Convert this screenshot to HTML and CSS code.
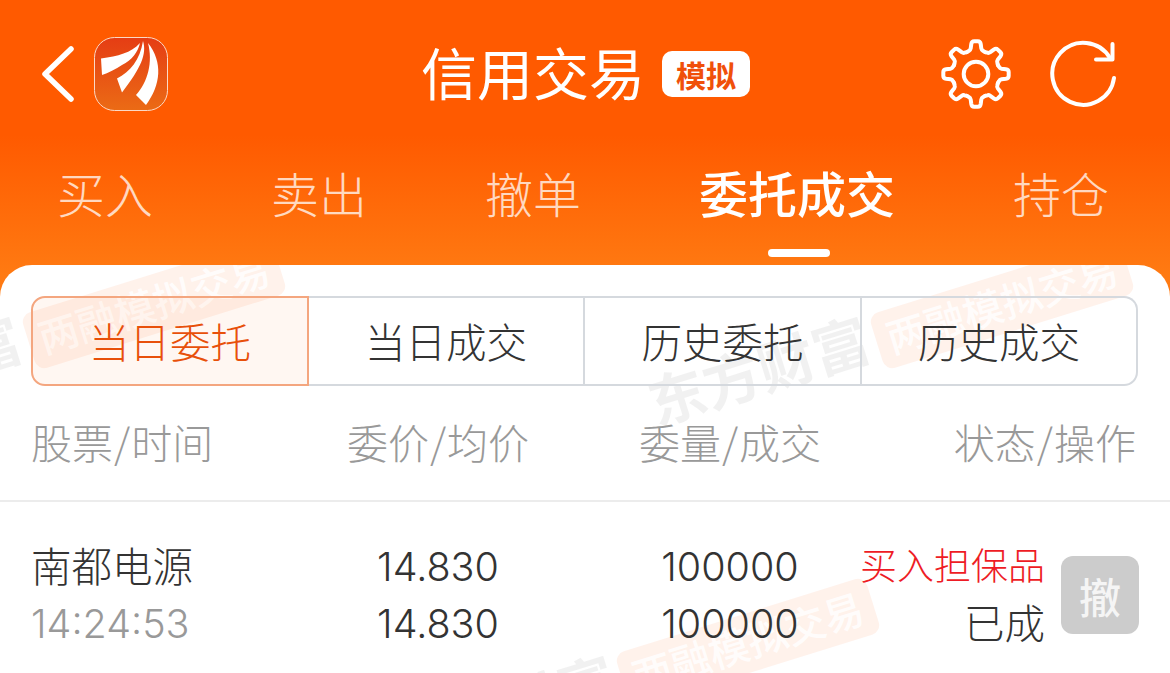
FILE: index.html
```html
<!DOCTYPE html>
<html lang="zh-CN">
<head>
<meta charset="utf-8">
<title>信用交易</title>
<link rel="stylesheet" href="styles.css">
</head>
<body>
<div class="page">
  <header class="head">
    <div class="topbar">
      <div class="top-left">
        <svg class="back" viewBox="0 0 40 60"><path d="M31 5 L5 30 L31 55"/></svg>
        <svg class="logo" viewBox="94 37 74 74">
          <defs><linearGradient id="lg" x1="0" y1="0" x2="0" y2="1"><stop offset="0" stop-color="#e53d14"/><stop offset="1" stop-color="#eb6b15"/></linearGradient></defs>
          <rect x="94.5" y="37.5" width="73" height="73" rx="20" fill="url(#lg)" stroke="#fbd9c6"/>
          <path fill="#fff" d="M101 58.5 C118 56 131 53 140 43 C138 52 132 60 122 65 C116 69 108 73 102 75 Z"/>
          <path fill="#fff" d="M143 41 C147 54 141 68 122 92.5 L117 78.5 C130 72 140 60 143 41Z"/>
          <path fill="#fff" d="M148 43 C163 62 161 85 146 105 L136 95 C148 82 153 62 148 43Z"/>
        </svg>
      </div>
      <div class="title-group">
        <span class="title">信用交易</span>
        <span class="sim">模拟</span>
      </div>
      <div class="top-right">
        <svg class="gear" viewBox="-38 -38 76 76">
          <defs><path id="tooth" d="M-9.6 -23.1 L-7.4 -24.4 Q-6 -25 -5.6 -27 L-5 -31.5 Q-4.5 -34.5 -2 -34.5 L2 -34.5 Q4.5 -34.5 5 -31.5 L5.6 -27 Q6 -25 7.4 -24.4 L9.6 -23.1"/></defs>
          <use href="#tooth"/>
          <use href="#tooth" transform="rotate(45)"/>
          <use href="#tooth" transform="rotate(90)"/>
          <use href="#tooth" transform="rotate(135)"/>
          <use href="#tooth" transform="rotate(180)"/>
          <use href="#tooth" transform="rotate(225)"/>
          <use href="#tooth" transform="rotate(270)"/>
          <use href="#tooth" transform="rotate(315)"/>
          <circle r="13"/>
        </svg>
        <svg class="refresh" viewBox="1047 38 70 72">
          <path d="M1113 78 A31 31 0 1 1 1109 58"/>
          <path d="M1111.5 44 V59.5 H1095"/>
        </svg>
      </div>
    </div>
    <nav class="tabs">
      <span class="tab">买入</span>
      <span class="tab">卖出</span>
      <span class="tab">撤单</span>
      <span class="tab tab-on">委托成交</span>
      <span class="tab">持仓</span>
    </nav>
  </header>
  <main class="card">
    <div class="wm-badge wm-b1">两融模拟交易</div>
    <div class="wm-badge wm-b2">两融模拟交易</div>
    <div class="wm-badge wm-b3">两融模拟交易</div>
    <div class="wm-text wm-t1">东方财富</div>
    <div class="wm-text wm-t2">东方财富</div>
    <div class="wm-text wm-t3">东方财富</div>
    <div class="content">
      <div class="segs">
        <div class="seg seg-on">当日委托</div>
        <div class="seg">当日成交</div>
        <div class="seg">历史委托</div>
        <div class="seg seg-last">历史成交</div>
      </div>
      <div class="grid thead">
        <div class="c1">股票<span class="slash">/</span>时间</div>
        <div class="c2">委价<span class="slash">/</span>均价</div>
        <div class="c3">委量<span class="slash">/</span>成交</div>
        <div class="c4 c4-head">状态<span class="slash">/</span>操作</div>
      </div>
      <div class="grid row">
        <div class="c1">
          <div class="cell cjk">南都电源</div>
          <div class="cell time">14:24:53</div>
        </div>
        <div class="c2">
          <div class="cell num">14.830</div>
          <div class="cell num">14.830</div>
        </div>
        <div class="c3">
          <div class="cell num">100000</div>
          <div class="cell num">100000</div>
        </div>
        <div class="c4 status">
          <div class="status-text">
            <div class="cell cjk buy">买入担保品</div>
            <div class="cell cjk">已成</div>
          </div>
          <div class="cancel">撤</div>
        </div>
      </div>
    </div>
  </main>
</div>
</body>
</html>
```
FILE: styles.css
```css
* { box-sizing: border-box; }
html, body { margin: 0; padding: 0; }
body {
  font-family: "Noto Sans CJK SC", "Noto Sans", sans-serif;
  font-weight: 300;
  color: #333;
  background: #fff;
}
.page { width: 1170px; height: 673px; overflow: hidden; position: relative; background: linear-gradient(#ff5a00 0, #ff5a00 135px, #ff7a12 275px, #ff7a12 100%); }
.head { height: 265px; display: flex; flex-direction: column; }
.topbar {
  height: 148px;
  display: grid;
  grid-template-columns: 1fr auto 1fr;
  align-items: center;
}
.top-left { display: flex; align-items: center; padding-left: 40px; gap: 14px; }
.back { width: 40px; height: 60px; }
.back path { fill: none; stroke: #fff; stroke-width: 5.5; stroke-linecap: round; stroke-linejoin: round; }
.logo { width: 74px; height: 74px; }
.title-group { display: flex; align-items: center; gap: 17px; margin-left: 1px; }
.title { color: #fff; font-size: 56px; line-height: 70px; font-weight: 400; padding-bottom: 6px; height: 76px; }
.sim {
  width: 88px; height: 46px;
  background: #fff; border-radius: 10px;
  color: #f0500a; font-size: 30px; font-weight: 700;
  display: flex; align-items: center; justify-content: center;
}
.top-right { display: flex; justify-content: flex-end; align-items: center; padding-right: 52px; gap: 36px; }
.gear { width: 72px; height: 72px; }
.gear path, .gear circle, .gear use { fill: none; stroke: #fff; stroke-width: 4.2; stroke-linecap: round; }
.refresh { width: 70px; height: 72px; }
.refresh path { fill: none; stroke: #fff; stroke-width: 4; stroke-linecap: round; stroke-linejoin: round; }
.tabs { display: flex; gap: 118px; padding-left: 57px; height: 120px; margin-top: -3px; }
.tab {
  position: relative;
  color: rgba(255,255,255,.75);
  font-size: 48px; line-height: 94px; white-space: nowrap; height: 94px; font-weight: 300;
}
.tab-on { color: #fff; font-size: 49px; font-weight: 500; }
.tab-on::after {
  content: ""; position: absolute; left: 69px; top: 104px;
  width: 62px; height: 8px; border-radius: 4px; background: #fff;
}
.card {
  position: relative; height: 408px; overflow: hidden;
  background: #fff; border-radius: 32px 32px 0 0;
}
.content { position: relative; }
.wm-badge, .wm-text { position: absolute; white-space: nowrap; transform: translate(-50%, -50%) rotate(-17.3deg); }
.wm-badge {
  width: 262px; height: 58px; border-radius: 10px;
  background: rgba(255, 90, 0, .08);
  color: rgba(255,255,255,.85);
  font-size: 40px; line-height: 54px; font-weight: 500; text-align: center;
}
.wm-text { color: rgba(0,0,0,.055); font-size: 57px; line-height: 60px; font-weight: 700; }
.wm-b1 { left: 154px; top: 39px; }
.wm-b2 { left: 1002px; top: 39px; }
.wm-b3 { left: 748px; top: 378px; }
.wm-t1 { left: -90px; top: 103px; }
.wm-t2 { left: 758px; top: 103px; }
.wm-t3 { left: 504px; top: 442px; }
.segs {
  margin: 31px 32px 0 31px;
  height: 90px;
  display: grid;
  grid-template-columns: 278px 276px 277px 1fr;
}
.seg {
  border: 2px solid #d5d9de; border-left: 0; border-right: 2px solid #d5d9de;
  display: flex; align-items: center; justify-content: center;
  font-size: 40.5px; color: #333; padding-bottom: 2px;
}
.seg-on {
  border: 2px solid #f4a67f; background: rgba(255, 90, 0, .05);
  color: #e8500a; border-radius: 14px 0 0 14px;
}
.seg-last { border-radius: 0 14px 14px 0; }
.grid {
  display: grid;
  grid-template-columns: 260px 292px 292px 1fr;
  padding: 0 32px;
}
.thead {
  height: 116px; align-items: center; padding-bottom: 4px;
  border-bottom: 2px solid #ececec;
  color: #999; font-size: 41px; white-space: nowrap;
}
.slash { margin: 0 1px; }
.c1 { margin-left: -1px; }
.c2, .c3 { text-align: center; }
.c4 { text-align: right; min-width: 0; }
.c4-head { padding-right: 2px; }
.row { padding-top: 37px; }
.cell { font-size: 40.5px; line-height: 57px; white-space: nowrap; }
.cjk { position: relative; top: -3px; }
.num { font-family: "Inter", sans-serif; font-size: 39.5px; font-weight: 300; }
.time { font-family: "Inter", sans-serif; font-size: 39.5px; color: #999; }
.status { display: flex; justify-content: flex-end; gap: 16px; margin-right: -1px; }
.status-text { text-align: right; flex-shrink: 0; }
.buy { color: #ee1c25; font-size: 37px; }
.cancel {
  width: 78px; height: 78px; margin-top: 17px; flex-shrink: 0;
  background: #ccc; border-radius: 12px;
  color: #f5f5f5; font-size: 42px; font-weight: 500;
  display: flex; align-items: center; justify-content: center;
}
```
